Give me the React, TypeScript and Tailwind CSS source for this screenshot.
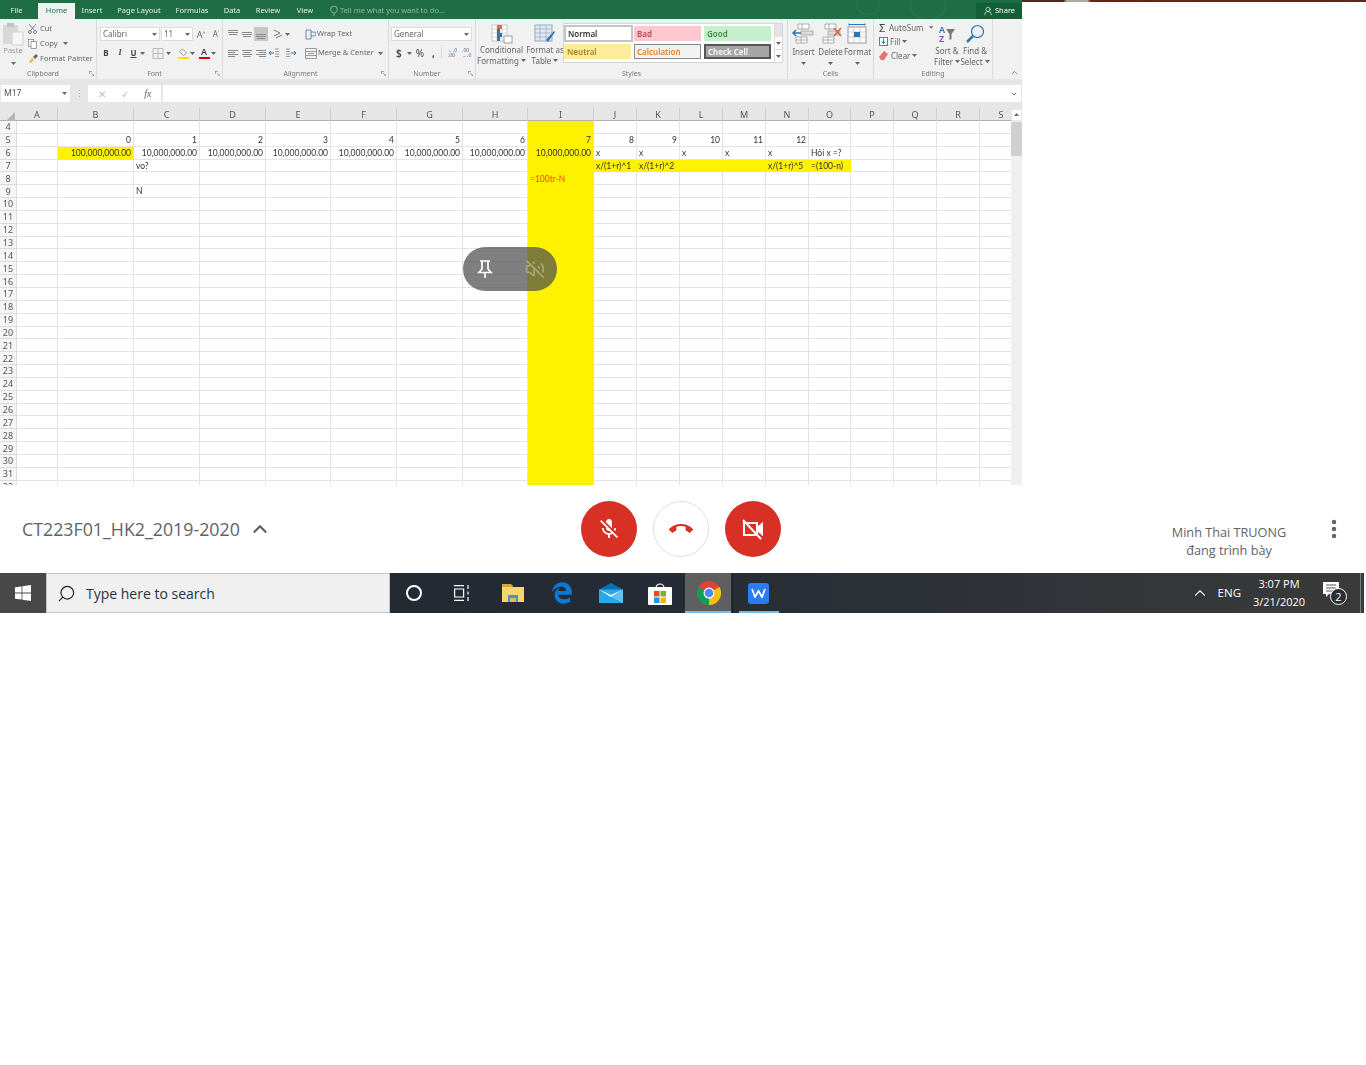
import { ChevronUp, ChevronDown, VolumeOff, Search, MoreVertical, UserRound } from 'lucide-react';
import { FaEdgeLegacy } from 'react-icons/fa';

const COLUMNS = ['A', 'B', 'C', 'D', 'E', 'F', 'G', 'H', 'I', 'J', 'K', 'L', 'M', 'N', 'O', 'P', 'Q', 'R', 'S'];
const ROWS = Array.from({ length: 29 }, (_, i) => i + 4);

// cell contents keyed by column + row
const CELLS: Record<string, { text: string; right?: boolean; color?: string }> = {
  B5: { text: '0', right: true },
  C5: { text: '1', right: true },
  D5: { text: '2', right: true },
  E5: { text: '3', right: true },
  F5: { text: '4', right: true },
  G5: { text: '5', right: true },
  H5: { text: '6', right: true },
  I5: { text: '7', right: true },
  J5: { text: '8', right: true },
  K5: { text: '9', right: true },
  L5: { text: '10', right: true },
  M5: { text: '11', right: true },
  N5: { text: '12', right: true },
  B6: { text: '100,000,000.00', right: true },
  C6: { text: '10,000,000.00', right: true },
  D6: { text: '10,000,000.00', right: true },
  E6: { text: '10,000,000.00', right: true },
  F6: { text: '10,000,000.00', right: true },
  G6: { text: '10,000,000.00', right: true },
  H6: { text: '10,000,000.00', right: true },
  I6: { text: '10,000,000.00', right: true },
  J6: { text: 'x' },
  K6: { text: 'x' },
  L6: { text: 'x' },
  M6: { text: 'x' },
  N6: { text: 'x' },
  O6: { text: 'Hỏi x =?' },
  C7: { text: 'vo?' },
  J7: { text: 'x/(1+r)^1' },
  K7: { text: 'x/(1+r)^2' },
  N7: { text: 'x/(1+r)^5' },
  O7: { text: '=(100-n)' },
  I8: { text: '=100tr-N', color: 'text-[#f0500a]' },
  C9: { text: 'N' },
};

function isYellow(col: string, row: number) {
  if (col === 'I') return true;
  if (col === 'B' && row === 6) return true;
  return row === 7 && ['J', 'K', 'L', 'M', 'N', 'O'].includes(col);
}

function Caret({ className = '' }: { className?: string }) {
  return (
    <svg width="5" height="3" viewBox="0 0 5 3" className={className}>
      <path d="M0 0h5L2.5 3z" fill="#666" />
    </svg>
  );
}

function Select({ text, width }: { text: string; width: string }) {
  return (
    <div className={`${width} h-[14px] bg-white border border-[#dcdcdc] flex items-center justify-between px-[2px] text-[8px] text-[#666]`}>
      <span>{text}</span>
      <Caret />
    </div>
  );
}

function Group({ label, width, launcher, children }: { label: string; width: string; launcher?: boolean; children: React.ReactNode }) {
  return (
    <div className={`${width} h-full flex flex-col border-r border-[#dadada]`}>
      <div className="h-[49px] flex">{children}</div>
      <div className={`h-[11px] flex items-center relative ${launcher ? 'pr-[10px]' : ''}`}>
        <span className="w-full text-center text-[7px] leading-none text-[#777]">{label}</span>
        {launcher && (
          <svg width="5" height="5" viewBox="0 0 5 5" className="absolute right-[2px] top-[3px]">
            <path d="M0 .5h3M.5 0v3M2 2l3 3M5 3v2H3" stroke="#888" strokeWidth=".7" fill="none" />
          </svg>
        )}
      </div>
    </div>
  );
}

// two-line ribbon caption, the second line ends in a small caret
function Caption({ top, bottom, className = '' }: { top: string; bottom: string; className?: string }) {
  return (
    <div className={`flex flex-col items-center leading-[11px] whitespace-nowrap ${className}`}>
      <span>{top}</span>
      <span className="flex items-center gap-[2px]">
        {bottom}
        <Caret />
      </span>
    </div>
  );
}

function AlignIcon({ kind, active }: { kind: 'l' | 'c' | 'r' | 't' | 'm' | 'b'; active?: boolean }) {
  const lines: Record<string, [number, number, number][]> = {
    t: [[1, 1, 10], [1, 3, 10], [2, 5, 8]],
    m: [[1, 3, 10], [1, 5, 10], [2, 7, 8]],
    b: [[1, 5, 10], [1, 7, 10], [2, 9, 8]],
    l: [[1, 2, 10], [1, 4, 7], [1, 6, 10], [1, 8, 7]],
    c: [[1, 2, 10], [2.5, 4, 7], [1, 6, 10], [2.5, 8, 7]],
    r: [[1, 2, 10], [4, 4, 7], [1, 6, 10], [4, 8, 7]],
  };
  return (
    <div className={`w-[14px] h-[14px] flex items-center justify-center ${active ? 'bg-[#c6c6c6]' : ''}`}>
      <svg width="12" height="10" viewBox="0 0 12 10">
        {lines[kind].map(([x, y, w], i) => (
          <rect key={i} x={x} y={y} width={w} height="1" fill="#8a8a8a" />
        ))}
      </svg>
    </div>
  );
}

function BigCellIcon({ kind }: { kind: 'insert' | 'delete' | 'format' }) {
  return (
    <svg width="24" height="22" viewBox="0 0 24 22">
      {kind === 'format' ? (
        <>
          <rect x="2" y="4" width="18" height="16" fill="#fff" stroke="#999" />
          <path d="M2 9h18M2 14h18M8 4v16M14 4v16" stroke="#bbb" strokeWidth=".7" />
          <rect x="8" y="9" width="6" height="5" fill="#2e75b6" />
          <path d="M3 1.5h16M3 .5v2M19 .5v2" stroke="#2e75b6" />
        </>
      ) : (
        <>
          <path d="M6 1h11v5H6zM4 14h11v6H4zM10 1v5M9 14v6M4 17h11" fill="#fff" stroke="#999" strokeWidth=".8" />
          <rect x="9" y="8" width="12" height="4" fill="#ddd" stroke="#999" strokeWidth=".7" />
          {kind === 'insert' ? (
            <path d="M9 10H1M4 7l-3 3 3 3" stroke="#2e75b6" strokeWidth="1.5" fill="none" />
          ) : (
            <path d="M15 5l7 8M22 5l-7 8" stroke="#d9603a" strokeWidth="1.5" />
          )}
        </>
      )}
    </svg>
  );
}

function Ribbon() {
  return (
    <div className="h-[60px] bg-[#f1f1f1] flex text-[#666] text-[7.5px] leading-none">
      <Group label="Clipboard" width="w-[97px]" launcher>
        <div className="w-[26px] flex flex-col items-center pt-[3px] text-[#9a9a9a]">
          <svg width="22" height="24" viewBox="0 0 22 24">
            <rect x="1" y="3" width="15" height="19" rx="1" fill="#d8d8d8" />
            <rect x="5" y="1" width="7" height="4" fill="#c2c2c2" />
            <rect x="10" y="10" width="11" height="13" fill="#f6f6f6" stroke="#cfcfcf" />
          </svg>
          <span className="mt-[1px]">Paste</span>
          <Caret className="mt-[7px]" />
        </div>
        <div className="flex flex-col gap-[6px] pt-[5px] pl-[2px] whitespace-nowrap">
          <div className="h-[9px] flex items-center gap-[3px]">
            <svg width="9" height="10" viewBox="0 0 9 10" fill="none" stroke="#5b6b7c" strokeWidth=".8">
              <path d="M1 0l5 6M8 0L3 6" />
              <circle cx="2" cy="8" r="1.5" />
              <circle cx="7" cy="8" r="1.5" />
            </svg>
            Cut
          </div>
          <div className="h-[9px] flex items-center gap-[3px]">
            <svg width="9" height="10" viewBox="0 0 9 10" fill="#fff" stroke="#888" strokeWidth=".8">
              <rect x=".5" y=".5" width="5" height="7" />
              <rect x="3" y="2.5" width="5.5" height="7" />
            </svg>
            Copy
            <Caret className="ml-[2px]" />
          </div>
          <div className="h-[9px] flex items-center gap-[2px]">
            <svg width="10" height="9" viewBox="0 0 10 9">
              <path d="M1 8l3-4 2 2-3 3z" fill="#e9b949" />
              <path d="M5 3l3-3 2 2-3 3z" fill="#666" />
            </svg>
            Format Painter
          </div>
        </div>
      </Group>

      <Group label="Font" width="w-[126px]" launcher>
        <div className="flex flex-col pt-[8px] pl-[3px]">
          <div className="flex items-center gap-[1px]">
            <Select text="Calibri" width="w-[60px]" />
            <Select text="11" width="w-[32px]" />
            <span className="w-[14px] text-center text-[9px]">A<sup className="text-[5px]">^</sup></span>
            <span className="w-[14px] text-center text-[8px]">A<sup className="text-[5px]">˅</sup></span>
          </div>
          <div className="flex items-center mt-[5px] h-[14px] text-[#444] text-[8px]">
            <b className="w-[14px] -ml-[1px] text-center">B</b>
            <i className="w-[14px] text-center font-['Liberation_Serif',serif] font-bold">I</i>
            <u className="w-[13px] text-center font-bold">U</u>
            <Caret className="mr-[4px]" />
            <svg width="12" height="11" viewBox="0 0 11 11" fill="none" stroke="#bbb" className="ml-[3px]">
              <path d="M.5.5h10v10H.5zM5.5.5v10M.5 5.5h10" />
            </svg>
            <Caret className="ml-[2px] mr-[6px]" />
            <div className="flex flex-col items-center w-[12px]">
              <svg width="10" height="8" viewBox="0 0 10 8" fill="#fff" stroke="#777" strokeWidth=".8">
                <path d="M4.5 1l4 4-3 2.5-4-4z" />
              </svg>
              <div className="w-[11px] h-[2px] bg-[#ffe000] mt-[1px]" />
            </div>
            <Caret className="ml-[1px] mr-[3px]" />
            <div className="flex flex-col items-center w-[12px]">
              <span className="text-[9px] leading-[8px] font-semibold">A</span>
              <div className="w-[11px] h-[2px] bg-[#e00000] mt-[1px]" />
            </div>
            <Caret className="ml-[1px]" />
          </div>
        </div>
      </Group>

      <Group label="Alignment" width="w-[166px]" launcher>
        <div className="flex flex-col pt-[8px] pl-[3px]">
          <div className="flex items-center h-[14px]">
            <AlignIcon kind="t" />
            <AlignIcon kind="m" />
            <AlignIcon kind="b" active />
            <div className="w-[26px] flex items-center justify-center gap-[1px]">
              <svg width="11" height="10" viewBox="0 0 11 10" fill="none" stroke="#778" strokeWidth="1">
                <path d="M1 1l6 3-6 3M3 9l6-3" />
              </svg>
              <Caret />
            </div>
            <div className="flex items-center gap-[1px] ml-[11px]">
              <svg width="11" height="11" viewBox="0 0 11 11" fill="none" stroke="#4f81bd" strokeWidth=".9">
                <path d="M1 1h5v9H1zM6 3h3a1.5 1.5 0 010 4H6" />
              </svg>
              Wrap Text
            </div>
          </div>
          <div className="flex items-center h-[14px] mt-[5px]">
            <AlignIcon kind="l" />
            <AlignIcon kind="c" />
            <AlignIcon kind="r" />
            <svg width="12" height="10" viewBox="0 0 12 10" fill="none" strokeWidth="1">
              <path d="M7 1h4M7 3.5h4M7 6h4M7 8.5h4" stroke="#999" />
              <path d="M6 5H1M3 3L1 5l2 2" stroke="#2e75b6" />
            </svg>
            <svg width="12" height="10" viewBox="0 0 12 10" className="ml-[5px]" fill="none" strokeWidth="1">
              <path d="M1 1h4M1 3.5h4M1 6h4M1 8.5h4" stroke="#999" />
              <path d="M6 5h5M9 3l2 2-2 2" stroke="#2e75b6" />
            </svg>
            <div className="flex items-center gap-[1px] ml-[8px]">
              <svg width="12" height="11" viewBox="0 0 12 11" fill="none" stroke="#888" strokeWidth=".8">
                <path d="M.5.5h11v10H.5zM.5 3.5h11M.5 7.5h11M3 5.5h6" />
              </svg>
              Merge &amp; Center
              <Caret className="ml-[3px]" />
            </div>
          </div>
        </div>
      </Group>

      <Group label="Number" width="w-[87px]" launcher>
        <div className="flex flex-col pt-[8px] pl-[2px]">
          <Select text="General" width="w-[81px]" />
          <div className="flex items-center h-[14px] mt-[5px] pl-[5px] text-[#444]">
            <span className="text-[10px] font-semibold">$</span>
            <Caret className="ml-[5px] mr-[4px]" />
            <span className="text-[10px]">%</span>
            <span className="ml-[8px] text-[10px] font-bold">,</span>
            <span className="ml-[6px] h-[12px] border-l border-[#ddd]" />
            <div className="ml-[6px] flex flex-col text-[5px] leading-[5px] text-[#2e75b6]">
              <span>←.0</span>
              <span className="text-[#666]">.00</span>
            </div>
            <div className="ml-[5px] flex flex-col text-[5px] leading-[5px] text-[#666]">
              <span>.00</span>
              <span className="text-[#2e75b6]">→.0</span>
            </div>
          </div>
        </div>
      </Group>

      <Group label="Styles" width="w-[312px]">
        <div className="w-[51px] flex flex-col items-center pt-[5px] text-[8px]">
          <svg width="22" height="20" viewBox="0 0 22 20">
            <rect x="1" y="1" width="15" height="16" fill="#fff" stroke="#c8c8c8" />
            <path d="M1 5h15M1 9h15M1 13h15M6 1v16M11 1v16" stroke="#c8c8c8" strokeWidth=".7" />
            <rect x="6" y="1" width="5" height="4" fill="#e56b3d" />
            <rect x="6" y="5" width="3" height="4" fill="#2e75b6" />
            <rect x="6" y="9" width="5" height="4" fill="#2e75b6" />
            <rect x="6" y="13" width="3" height="4" fill="#2e75b6" />
            <rect x="13" y="12" width="8" height="7" fill="#fff" stroke="#888" strokeWidth=".8" />
          </svg>
          <Caption top="Conditional" bottom="Formatting" />
        </div>
        <div className="w-[36px] flex flex-col items-center pt-[5px] text-[8px]">
          <svg width="22" height="20" viewBox="0 0 22 20">
            <rect x="1" y="1" width="17" height="16" fill="#dfe8f3" stroke="#9aa9bb" />
            <path d="M1 5h17M1 9h17M1 13h17M6 1v16M12 1v16" stroke="#9aa9bb" strokeWidth=".7" />
            <path d="M12 16l8-9 1 1-7 10z" fill="#2e75b6" />
          </svg>
          <Caption top="Format as" bottom="Table" />
        </div>
        <div className="mt-[4px] h-[40px] w-[220px] bg-white border border-[#d5d5d5] flex">
          <div className="grid grid-cols-[70px_70px_70px] grid-rows-[18px_18px] pt-[1px] text-[8px] font-semibold">
            <div className="mr-[1px] mb-[1px] border-2 border-[#c4c4c4] flex items-center pl-[2px] text-[#333]">Normal</div>
            <div className="mr-[3px] mb-[2px] mt-[1px] bg-[#ffc7ce] flex items-center pl-[3px] text-[#b5474e]">Bad</div>
            <div className="mr-[3px] mb-[2px] mt-[1px] bg-[#c6efce] flex items-center pl-[3px] text-[#3f8a3f]">Good</div>
            <div className="mr-[3px] mt-[1px] mb-[2px] bg-[#ffeb9c] flex items-center pl-[3px] text-[#a67f1d]">Neutral</div>
            <div className="mr-[3px] mt-[1px] mb-[2px] bg-[#f2f2f2] border border-[#8a8a8a] flex items-center pl-[2px] text-[#f08020]">Calculation</div>
            <div className="mr-[3px] mt-[1px] mb-[2px] bg-[#a5a5a5] border-2 border-[#555] flex items-center pl-[2px] text-white">Check Cell</div>
          </div>
          <div className="ml-auto w-[8px] flex flex-col border-l border-[#ddd] text-[5px]">
            <div className="h-[13px] bg-[#e3e3e3]" />
            <div className="h-[13px] flex items-center justify-center border-b border-[#ddd]"><Caret /></div>
            <div className="h-[12px] flex items-center justify-center"><Caret /></div>
          </div>
        </div>
      </Group>

      <Group label="Cells" width="w-[86px]">
        <div className="flex pt-[4px] pl-[2px] text-[8px]">
          {(['insert', 'delete', 'format'] as const).map((kind) => (
            <div key={kind} className="w-[27px] flex flex-col items-center">
              <BigCellIcon kind={kind} />
              <span className="mt-[3px] capitalize">{kind}</span>
              <Caret className="mt-[6px]" />
            </div>
          ))}
        </div>
      </Group>

      <Group label="Editing" width="w-[119px]">
        <div className="w-[59px] flex flex-col pt-[4px] pl-[5px] gap-[5px] text-[8px]">
          <div className="h-[9px] flex items-center gap-[2px]">
            <span className="w-[9px] text-[11px] text-[#444]">Σ</span>
            AutoSum
            <Caret className="ml-[3px]" />
          </div>
          <div className="h-[9px] flex items-center gap-[2px]">
            <svg width="9" height="9" viewBox="0 0 9 9">
              <rect x=".5" y=".5" width="8" height="8" fill="#fff" stroke="#777" />
              <path d="M4.5 1.5v5M2.5 4.5l2 2 2-2" stroke="#2e75b6" fill="none" />
            </svg>
            Fill
            <Caret />
          </div>
          <div className="h-[9px] flex items-center gap-[2px]">
            <svg width="10" height="9" viewBox="0 0 10 9">
              <path d="M0 6l5-6 4 3-4 6H2z" fill="#e57373" />
            </svg>
            Clear
            <Caret />
          </div>
        </div>
        <div className="w-[28px] flex flex-col items-center pt-[4px] text-[8px]">
          <div className="h-[22px] flex items-center gap-[1px]">
            <span className="flex flex-col text-[9px] leading-[9px] font-semibold">
              <span className="text-[#2e75b6]">A</span>
              <span className="text-[#7a4fa0]">Z</span>
            </span>
            <svg width="9" height="11" viewBox="0 0 9 11"><path d="M0 0h9L5.5 5v5L3.5 11V5z" fill="#777" /></svg>
          </div>
          <Caption top="Sort &" bottom="Filter" />
        </div>
        <div className="w-[28px] flex flex-col items-center pt-[4px] text-[8px]">
          <div className="h-[22px] flex items-center">
            <svg width="20" height="20" viewBox="0 0 20 20" fill="none" stroke="#2e75b6">
              <circle cx="12.5" cy="7.5" r="6" strokeWidth="1.2" />
              <path d="M8 12l-6 6" strokeWidth="2.5" />
            </svg>
          </div>
          <Caption top="Find &" bottom="Select" />
        </div>
      </Group>

      <div className="flex-1 flex items-end justify-end pr-[3px] pb-[2px]">
        <ChevronUp size={9} strokeWidth={2} />
      </div>
    </div>
  );
}

function Sheet() {
  const template = 'grid-cols-[17px_41px_76px_66px_66px_65px_66px_66px_65px_66px_43px_43px_43px_43px_43px_42px_43px_43px_43px_43px]';
  return (
    <div className="flex-1 flex overflow-hidden">
      <div className="w-[1011px] flex flex-col overflow-hidden">
        <div className={`h-[13px] shrink-0 grid ${template} bg-[#e6e6e6] border-b border-[#b0b0b0]`}>
          <div className="flex items-end justify-end pr-[2px] pb-[1px]">
            <svg width="9" height="9" viewBox="0 0 9 9"><path d="M9 0v9H0z" fill="#b5b5b5" /></svg>
          </div>
          {COLUMNS.map((c) => (
            <div key={c} className="flex items-center justify-center border-r border-[#cfcfcf] text-[9px] text-[#555]">{c}</div>
          ))}
        </div>
        <div className={`grid ${template} auto-rows-[12.85px] bg-white font-['Lato',sans-serif] text-[8.5px] leading-none text-[#333]`}>
          {ROWS.map((r) => (
            <div key={r} className="contents">
              <div className="bg-[#f6f6f6] border-r border-b border-[#dcdcdc] flex items-center justify-center text-[9px] text-[#555] font-['Noto_Sans',sans-serif]">{r}</div>
              {COLUMNS.map((c) => {
                const cell = CELLS[`${c}${r}`];
                return (
                  <div
                    key={c}
                    className={`flex items-center pt-[1px] pl-[2px] pr-[2px] whitespace-nowrap border-r border-b ${
                      isYellow(c, r) ? 'bg-[#fff200] border-[#fff200]' : 'border-[#e4e4e4]'
                    } ${cell?.right ? 'justify-end' : ''} ${cell?.color ?? ''}`}
                  >
                    {cell?.text}
                  </div>
                );
              })}
            </div>
          ))}
        </div>
      </div>
      <div className="w-[11px] bg-[#f0f0f0] flex flex-col">
        <div className="h-[13px] bg-[#e6e6e6] flex items-center justify-center">
          <div className="w-[9px] h-[10px] bg-white flex items-center justify-center">
            <svg width="5" height="3" viewBox="0 0 5 3"><path d="M0 3h5L2.5 0z" fill="#666" /></svg>
          </div>
        </div>
        <div className="h-[34px] bg-[#d0d0d0] mt-[1px]" />
      </div>
    </div>
  );
}

function Excel() {
  const tab = 'h-[16px] flex items-center justify-center';
  return (
    <div className="relative w-[1022px] h-[485px] flex flex-col overflow-hidden bg-[#e6e6e6] font-['Noto_Sans',sans-serif] blur-[0.4px]">
      <div className="h-[19px] bg-[#1f6d45] flex items-end text-[7.5px] leading-none text-[#e4efe8] relative overflow-hidden">
        <svg width="130" height="19" viewBox="0 0 130 19" className="absolute left-[840px] top-0" fill="none" stroke="#277349" strokeWidth="2">
          <circle cx="28" cy="4" r="11" />
          <circle cx="88" cy="2" r="18" />
        </svg>
        <span className={`w-[33px] ${tab}`}>File</span>
        <span className={`ml-[5px] w-[37px] bg-[#f1f1f1] text-[#1f6d45] ${tab}`}>Home</span>
        <span className={`ml-[4px] w-[26px] ${tab}`}>Insert</span>
        <span className={`ml-[9px] w-[50px] ${tab}`}>Page Layout</span>
        <span className={`ml-[10px] w-[36px] ${tab}`}>Formulas</span>
        <span className={`ml-[12px] w-[20px] ${tab}`}>Data</span>
        <span className={`ml-[12px] w-[28px] ${tab}`}>Review</span>
        <span className={`ml-[13px] w-[20px] ${tab}`}>View</span>
        <span className="ml-[15px] h-[16px] flex items-center gap-[2px] text-[#8fb9a2]">
          <svg width="8" height="10" viewBox="0 0 8 10" fill="none" stroke="#a9cdb9" strokeWidth=".8">
            <path d="M2.5 7C2 5.5.7 5 .7 3.3a3.3 3.3 0 016.6 0C7.3 5 6 5.5 5.5 7zM3 9h2" />
          </svg>
          Tell me what you want to do...
        </span>
        <span className="ml-auto relative w-[46px] h-[16px] bg-[#155f38] flex items-center justify-center gap-[2px] text-white">
          <UserRound size={10} strokeWidth={1.5} />
          Share
        </span>
      </div>

      <Ribbon />

      <div className="h-[6px]" />
      <div className="h-[17px] flex items-stretch text-[8px] text-[#555]">
        <div className="w-[69px] ml-[1px] bg-white flex items-center justify-between px-[3px] text-[8.5px] leading-none">
          M17
          <Caret />
        </div>
        <div className="w-[18px] flex items-center justify-center text-[#aaa] text-[9px]">⋮</div>
        <div className="w-[73px] bg-white flex items-center justify-around px-[2px] text-[#bbb] text-[10px] leading-none">
          <span>✕</span>
          <span>✓</span>
          <span className="text-[#666] italic font-['Liberation_Serif',serif]">fx</span>
        </div>
        <div className="ml-[2px] flex-1 mr-[1px] bg-white flex items-center justify-end pr-[3px]">
          <ChevronDown size={8} strokeWidth={2.5} className="text-[#666]" />
        </div>
      </div>
      <div className="h-[6px]" />

      <Sheet />

      <div className="absolute left-[463px] top-[247px] w-[94px] h-[44px] rounded-full bg-[#505050ba] flex items-center justify-between px-[12px]">
        <svg width="20" height="20" viewBox="0 0 20 20" fill="none" stroke="#fff" strokeWidth="1.7">
          <path d="M5 2h10M7 2v8l-3 3.5h12L13 10V2M10 13.5V19" />
        </svg>
        <VolumeOff size={20} strokeWidth={1.8} className="text-[#aaaa78]" />
      </div>
    </div>
  );
}

function RoundButton({ children, outline }: { children: React.ReactNode; outline?: boolean }) {
  return (
    <div className={`w-[56px] h-[56px] rounded-full flex items-center justify-center ${outline ? 'bg-white border border-[#dfdfdf]' : 'bg-[#d93025]'}`}>
      {children}
    </div>
  );
}

function MeetBar() {
  return (
    <div className="h-[88px] w-[1366px] bg-white flex items-center">
      <div className="w-[581px] pl-[22px] flex items-center gap-[9px] text-[#5f6368]">
        <span className="font-['Open_Sans',sans-serif] text-[17.8px]">CT223F01_HK2_2019-2020</span>
        <ChevronUp size={22} strokeWidth={2.5} />
      </div>
      <div className="flex gap-4">
        <RoundButton>
          <svg width="24" height="24" viewBox="0 0 24 24" fill="#fff">
            <path d="M19 11h-1.7c0 .74-.16 1.43-.43 2.05l1.23 1.23c.56-.98.9-2.09.9-3.28zm-4.02.17c0-.06.02-.11.02-.17V5c0-1.66-1.34-3-3-3S9 3.34 9 5v.18l5.98 5.99zM4.27 3L3 4.27l6.01 6.01V11c0 1.66 1.33 3 2.99 3 .22 0 .44-.03.65-.08l1.66 1.66c-.71.33-1.5.52-2.31.52-2.76 0-5.3-2.1-5.3-5.1H5c0 3.41 2.72 6.23 6 6.72V21h2v-3.28c.91-.13 1.77-.45 2.54-.9L19.73 21 21 19.73 4.27 3z" />
          </svg>
        </RoundButton>
        <RoundButton outline>
          <svg width="24" height="24" viewBox="0 0 24 24" fill="#d93025">
            <path d="M12 9c-1.6 0-3.15.25-4.6.72v3.1c0 .39-.23.74-.56.9-.98.49-1.87 1.12-2.66 1.85-.18.18-.43.28-.7.28-.28 0-.53-.11-.71-.29L.29 13.08c-.18-.17-.29-.42-.29-.7 0-.28.11-.53.29-.71C3.34 8.78 7.46 7 12 7s8.66 1.78 11.71 4.67c.18.18.29.43.29.71 0 .28-.11.53-.29.71l-2.48 2.48c-.18.18-.43.29-.71.29-.27 0-.52-.11-.7-.28-.79-.74-1.69-1.36-2.67-1.85-.33-.16-.56-.5-.56-.9v-3.1C15.15 9.25 13.6 9 12 9z" />
          </svg>
        </RoundButton>
        <RoundButton>
          <svg width="24" height="24" viewBox="0 0 24 24" fill="none" stroke="#fff" strokeWidth="2">
            <path d="M3 6h13v12H3z" />
            <path d="M17 10.5l4-3.5v10l-4-3.5z" fill="#fff" />
            <path d="M2 3l18 19" />
          </svg>
        </RoundButton>
      </div>
      <div className="flex-1 flex items-center">
        <div className="ml-[361px] w-[174px] text-center font-['Open_Sans',sans-serif] text-[12.7px] leading-[18px] text-[#5f6368] pt-[24px]">
          Minh Thai TRUONG
          <br />
          đang trình bày
        </div>
        <MoreVertical size={24} strokeWidth={2.5} className="ml-[6px] -mt-[1px] text-[#5f6368]" />
      </div>
    </div>
  );
}

function TaskItem({ children, active, underline, className = '' }: { children: React.ReactNode; active?: boolean; underline?: boolean; className?: string }) {
  return (
    <div className={`relative h-full flex items-center justify-center ${active ? 'bg-[#5f5f5f]' : ''} ${className}`}>
      {children}
      {underline && <div className="absolute bottom-0 left-0 right-0 h-[2px] bg-[#76b9ed]" />}
    </div>
  );
}

function Taskbar() {
  return (
    <div className="h-[40px] w-[1364px] flex bg-gradient-to-r from-[#22272e] via-[#252c35] to-[#3a3a3a] text-white">
      <div className="w-[46px] bg-[#484848] flex items-center justify-center">
        <svg width="16" height="16" viewBox="0 0 16 16" fill="#fff">
          <path d="M0 2.3L6.6 1.4v6.2H0zM7.4 1.3L16 0v7.6H7.4zM0 8.4h6.6v6.2L0 13.7zM7.4 8.4H16V16l-8.6-1.200z" />
        </svg>
      </div>
      <div className="w-[344px] bg-[#f0f0f0] border border-[#c4c4c4] flex items-center pl-[10px] gap-[10px] font-['Open_Sans',sans-serif] text-[14px] text-[#1f3347]">
        <Search size={19} strokeWidth={1.5} className="-scale-x-100 text-[#222]" />
        Type here to search
      </div>

      <TaskItem className="w-[48px]">
        <div className="w-[16px] h-[16px] rounded-full border-2 border-white" />
      </TaskItem>
      <TaskItem className="w-[50px]">
        <svg width="16" height="16" viewBox="0 0 16 16" fill="none" stroke="#fff" strokeWidth="1.2" className="-ml-[2px]">
          <path d="M0 .6h10M0 15.400h10M.6 4h9v8h-9zM14 0v4M14 6.500v3M14 12v4" />
        </svg>
      </TaskItem>
      <TaskItem className="w-[49px]">
        <svg width="22" height="18" viewBox="0 0 22 18">
          <path d="M0 0h9l2 2v3H0z" fill="#d9a53a" />
          <path d="M0 3h22v15H0z" fill="#f7d66b" />
          <path d="M6 11h10v7h-2v-4H8v4H6z" fill="#3d96d6" />
          <path d="M8 14h6v4H8z" fill="#f0b94a" />
        </svg>
      </TaskItem>
      <TaskItem className="w-[49px]">
        <FaEdgeLegacy size={22} color="#0a78d7" />
      </TaskItem>
      <TaskItem className="w-[49px]">
        <svg width="24" height="20" viewBox="0 0 24 20">
          <path d="M0 6.5L12 0l12 6.5L12 13z" fill="#0c6fb8" />
          <path d="M0 6.5h24V20H0z" fill="#2aa8e6" />
          <path d="M0 6.5L12 14l12-7.500L12 12z" fill="#fff" />
          <path d="M12 14l12-7.500V20z" fill="#5cc2f0" />
        </svg>
      </TaskItem>
      <TaskItem className="w-[49px]">
        <svg width="24" height="24" viewBox="0 0 24 24">
          <path d="M8 7a4 4 0 018 0" fill="none" stroke="#fff" strokeWidth="1.2" />
          <rect x="0" y="6" width="24" height="18" rx="1" fill="#fff" />
          <rect x="6" y="10" width="5.5" height="5.5" fill="#e74a25" />
          <rect x="12.5" y="10" width="5.5" height="5.5" fill="#7cb32c" />
          <rect x="6" y="16.5" width="5.5" height="5.5" fill="#1a9be0" />
          <rect x="12.5" y="16.5" width="5.5" height="5.5" fill="#f6b70f" />
        </svg>
      </TaskItem>
      <TaskItem active underline className="w-[46px] ml-[1px] pl-[2px]">
        <svg width="24" height="24" viewBox="0 0 24 24">
          <circle cx="12" cy="12" r="12" fill="#db4437" />
          <path d="M12 12L22.4 6A12 12 0 0112 24z" fill="#f4c20d" />
          <path d="M12 12L12 24A12 12 0 011.6 6z" fill="#0f9d58" />
          <circle cx="12" cy="12" r="5.5" fill="#fff" />
          <circle cx="12" cy="12" r="4.3" fill="#4a8af4" />
        </svg>
      </TaskItem>
      <div className="w-[1px] bg-[#1b1f24] ml-[1px]" />
      <TaskItem underline className="w-[40px] ml-[6px] pr-[2px]">
        <div className="w-[21px] h-[21px] rounded-[3px] bg-[#2b7cf0] flex items-center justify-center">
          <svg width="15" height="10" viewBox="0 0 15 10" fill="none" stroke="#fff" strokeWidth="1.8">
            <path d="M1 1l3 8 3.5-6L11 9l3-8" />
          </svg>
        </div>
      </TaskItem>

      <div className="ml-auto flex items-center">
        <ChevronUp size={18} strokeWidth={1.5} className="text-[#f0f0f0]" />
        <span className="ml-[9px] font-['Open_Sans',sans-serif] text-[11.5px]">ENG</span>
        <div className="ml-[12px] w-[52px] text-center font-['Open_Sans',sans-serif] text-[11px] leading-[18px] whitespace-nowrap -mt-[1px]">
          3:07 PM
          <br />
          3/21/2020
        </div>
        <div className="relative ml-[18px] w-[24px] h-[24px]">
          <svg width="18" height="17" viewBox="0 0 18 17" className="absolute left-0 top-[1px]">
            <path d="M0 0h16v12H6l-3 3v-3H0z" fill="#fff" />
            <path d="M3 3h10M3 6h10M3 9h7" stroke="#555" />
          </svg>
          <div className="absolute left-[7px] top-[7px] w-[17px] h-[17px] rounded-full bg-[#2a2f36] border border-white flex items-center justify-center text-[11px] leading-none font-['Open_Sans',sans-serif]">2</div>
        </div>
        <div className="ml-[13px] h-full w-[1px] bg-[#7a7f85]" />
        <div className="w-[3px]" />
      </div>
    </div>
  );
}

export default function App() {
  return (
    <div className="w-[1366px] h-[1065px] bg-white overflow-hidden relative">
      <div className="flex">
        <Excel />
        <div className="flex-1 h-[2px] bg-[linear-gradient(to_right,#4a2a1e_0%,#4a2a1e_12%,#b0aca4_13%,#b0aca4_19%,#6b1f12_20%,#5a2a1e_100%)]" />
      </div>
      <MeetBar />
      <Taskbar />
    </div>
  );
}
